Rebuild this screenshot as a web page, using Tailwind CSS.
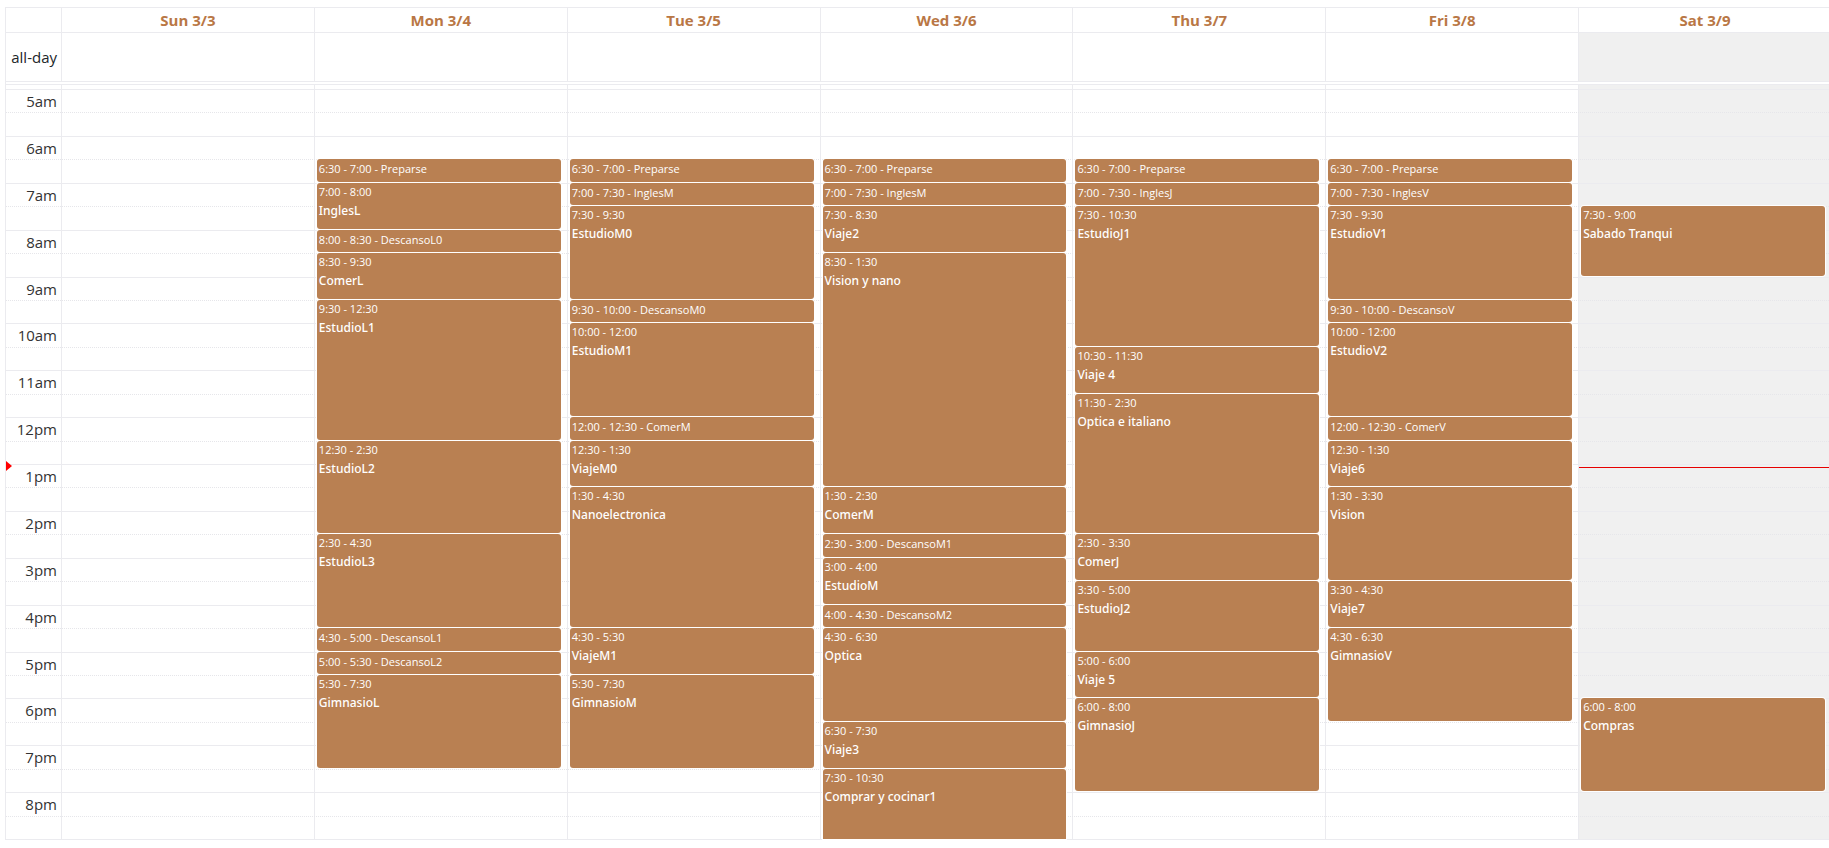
<!DOCTYPE html>
<html lang="en">
<head>
<meta charset="utf-8">
<meta name="viewport" content="width=device-width, initial-scale=1">
<title>Week calendar</title>
<script src="https://cdn.jsdelivr.net/npm/@tailwindcss/browser@4"></script>
</head>
<body class="overflow-x-hidden bg-white font-['Open_Sans','Noto_Sans',sans-serif] text-[15px] text-[#212529]">
<main class="-mr-0.5 flex min-h-screen flex-col pt-[7px] pb-2 pl-[5px]">
  <div class="flex grow flex-col border border-r-0 border-[#ebebef]">
    <div id="head" class="grid h-6 grid-cols-[55px_repeat(7,minmax(0,1fr))] text-center text-[15px] leading-5 font-bold text-[#b97745]">
      <div></div>
    </div>
    <div id="allday" class="grid h-[50px] grid-cols-[55px_repeat(7,minmax(0,1fr))] border-y border-[#ebebef]">
      <div class="flex items-center justify-end pr-1">all-day</div>
    </div>
    <div class="mt-0.5 grid h-[5px] grid-cols-[55px_repeat(7,minmax(0,1fr))] border-t border-[#ebebef]" id="gap">
      <div></div>
    </div>
    <div id="grid" class="relative grid grow grid-cols-[55px_repeat(7,minmax(0,1fr))] grid-rows-[repeat(32,minmax(23px,1fr))]"></div>
  </div>
</main>
<script>
const START = 5, ROWS = 32, NOW = 13.06;
const days = [
  ['Sun 3/3', []],
  ['Mon 3/4', [
    ['6:30', '7:00', 'Preparse'], ['7:00', '8:00', 'InglesL'], ['8:00', '8:30', 'DescansoL0'],
    ['8:30', '9:30', 'ComerL'], ['9:30', '12:30', 'EstudioL1'], ['12:30', '2:30', 'EstudioL2'],
    ['2:30', '4:30', 'EstudioL3'], ['4:30', '5:00', 'DescansoL1'], ['5:00', '5:30', 'DescansoL2'],
    ['5:30', '7:30', 'GimnasioL']]],
  ['Tue 3/5', [
    ['6:30', '7:00', 'Preparse'], ['7:00', '7:30', 'InglesM'], ['7:30', '9:30', 'EstudioM0'],
    ['9:30', '10:00', 'DescansoM0'], ['10:00', '12:00', 'EstudioM1'], ['12:00', '12:30', 'ComerM'],
    ['12:30', '1:30', 'ViajeM0'], ['1:30', '4:30', 'Nanoelectronica'], ['4:30', '5:30', 'ViajeM1'],
    ['5:30', '7:30', 'GimnasioM']]],
  ['Wed 3/6', [
    ['6:30', '7:00', 'Preparse'], ['7:00', '7:30', 'InglesM'], ['7:30', '8:30', 'Viaje2'],
    ['8:30', '1:30', 'Vision y nano'], ['1:30', '2:30', 'ComerM'], ['2:30', '3:00', 'DescansoM1'],
    ['3:00', '4:00', 'EstudioM'], ['4:00', '4:30', 'DescansoM2'], ['4:30', '6:30', 'Optica'],
    ['6:30', '7:30', 'Viaje3'], ['7:30', '10:30', 'Comprar y cocinar1']]],
  ['Thu 3/7', [
    ['6:30', '7:00', 'Preparse'], ['7:00', '7:30', 'InglesJ'], ['7:30', '10:30', 'EstudioJ1'],
    ['10:30', '11:30', 'Viaje 4'], ['11:30', '2:30', 'Optica e italiano'], ['2:30', '3:30', 'ComerJ'],
    ['3:30', '5:00', 'EstudioJ2'], ['5:00', '6:00', 'Viaje 5'], ['6:00', '8:00', 'GimnasioJ']]],
  ['Fri 3/8', [
    ['6:30', '7:00', 'Preparse'], ['7:00', '7:30', 'InglesV'], ['7:30', '9:30', 'EstudioV1'],
    ['9:30', '10:00', 'DescansoV'], ['10:00', '12:00', 'EstudioV2'], ['12:00', '12:30', 'ComerV'],
    ['12:30', '1:30', 'Viaje6'], ['1:30', '3:30', 'Vision'], ['3:30', '4:30', 'Viaje7'],
    ['4:30', '6:30', 'GimnasioV']]],
  ['Sat 3/9', [['7:30', '9:00', 'Sabado Tranqui'], ['6:00', '8:00', 'Compras']]],
];

// Half-hour row number of a clock time; times earlier than `after` are in the afternoon.
function rowOf(time, after) {
  const [h, m] = time.split(':').map(Number);
  let row = (h - START) * 2 + m / 30 + 1;
  if (row < after) row += 24;
  return row;
}

const today = days.length - 1;
const add = (id, html) => document.getElementById(id).insertAdjacentHTML('beforeend', html);

days.forEach(([label], i) => {
  const cell = i === today ? 'border-l border-[#ebebef] bg-[#f0f0f0]' : 'border-l border-[#ebebef]';
  add('head', `<div class="border-l border-[#ebebef]"><a href="#" class="block pt-0.5">${label}</a></div>`);
  add('allday', `<div class="${cell}"></div>`);
  add('gap', `<div class="${cell}"></div>`);
  add('grid', `<div class="${cell}" style="grid-area:1/${i + 2}/-1/${i + 3}"></div>`);
});

for (let r = 0; r < ROWS; r++) {
  const line = r % 2 ? 'border-t border-dotted border-[#e6e6ea]' : 'border-t border-[#ebebef]';
  add('grid', `<div class="${line}" style="grid-area:${r + 1}/1/${r + 2}/-1"></div>`);
  if (r % 2 === 0) {
    const h = START + r / 2;
    add('grid', `<div class="min-h-0 pt-px pr-1 text-right leading-[22px] text-[#333]" style="grid-area:${r + 1}/1/${r + 2}/2">${h % 12 || 12}${h < 12 ? 'am' : 'pm'}</div>`);
  }
}

days.forEach(([, events], i) => {
  let prev = 1;
  const html = events.map(([from, to, title], n) => {
    const afternoon = i === today && n === 1 ? 20 : prev;
    const a = rowOf(from, afternoon), b = rowOf(to, a);
    prev = b;
    const clipped = b > ROWS + 1;
    const shape = clipped ? 'rounded-t-[3px]' : 'mb-px rounded-[3px]';
    const body = b - a === 1
      ? `<span class="block text-[11px] leading-5">${from} - ${to} - ${title}</span>`
      : `<span class="block text-[11px] leading-[18px]">${from} - ${to}</span><span class="block font-['Noto_Sans','Open_Sans',sans-serif] text-[12px] leading-5">${title}</span>`;
    return `<a href="#" class="ml-0.5 mr-1.5 min-h-0 overflow-hidden bg-[#b98052] px-0.5 font-medium whitespace-nowrap text-white shadow-[0_0_0_1px_#fff] ${shape}" style="grid-row:${a}/${Math.min(b, ROWS + 1)}">${body}</a>`;
  }).join('');
  add('grid', `<div class="ml-px grid min-h-0 grid-rows-subgrid" style="grid-area:1/${i + 2}/-1/${i + 3}">${html}</div>`);
});

// Current time: arrow on the axis, line across today's column.
const nowTop = (NOW - START) / (ROWS / 2) * 100 + '%';
add('grid', `<div class="absolute left-0 -mt-1.5 border-y-[5px] border-l-[6px] border-y-transparent border-l-[#f00]" style="top:${nowTop}"></div>`);
add('grid', `<div class="relative" style="grid-area:1/${today + 2}/-1/${today + 3}"><div class="absolute right-0 left-px h-px bg-[#e60000]" style="top:${nowTop}"></div></div>`);
</script>
</body>
</html>
